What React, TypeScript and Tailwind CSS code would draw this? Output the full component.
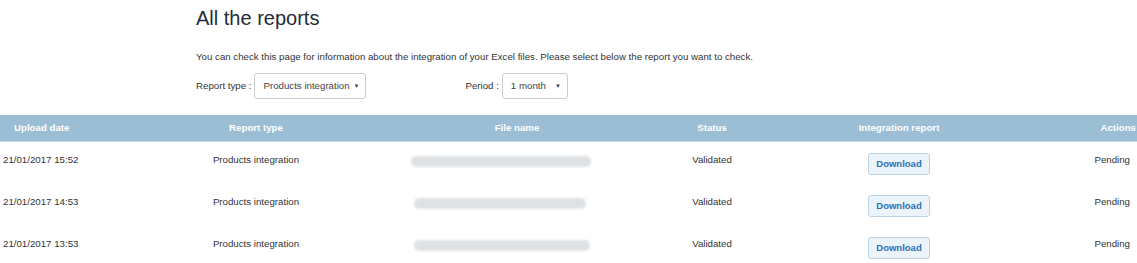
import React from "react";

const rows = [
  { date: "21/01/2017 15:52", bar: "w-[180px] ml-[-3px]" },
  { date: "21/01/2017 14:53", bar: "w-[172px]" },
  { date: "21/01/2017 13:53", bar: "w-[176px]" },
];

function Select({ label, value, w }: { label: string; value: string; w: string }) {
  return (
    <div className="flex items-center whitespace-nowrap">
      <span className="text-[9.7px] text-[#333]">{label}</span>
      <div
        className={`ml-[3px] flex h-[26px] items-center justify-between rounded-[3px] border border-[#ccc] bg-white pl-[8px] pr-[6px] text-[9.7px] text-[#444] ${w}`}
      >
        <span>{value}</span>
        <span className="text-[6px] text-[#444]">▼</span>
      </div>
    </div>
  );
}

export default function App() {
  const grid = "grid grid-cols-[170px_172px_320px_100px_274px_101px]";
  return (
    <div className="w-[1137px] bg-white font-['Liberation_Sans',Arial,sans-serif] text-[#333]">
      <div className="pl-[196px]">
        <h1 className="pt-[5px] text-[20px] leading-[26px] text-[#1e2c3c]">All the reports</h1>
        <p className="mt-[19px] text-[9.7px] leading-[14px] text-[#333]">
          You can check this page for information about the integration of your Excel files. Please select below the report you want to check.
        </p>
        <div className="mt-[9px] flex items-center">
          <Select label="Report type :" value="Products integration" w="w-[112px]" />
          <div className="ml-[99px]">
            <Select label="Period :" value="1 month" w="w-[66px]" />
          </div>
        </div>
      </div>

      <div className="mt-[16px]">
        <div className={`${grid} h-[27px] items-center border-b border-[#c6d9e7] bg-[#9bbed5] text-[9.7px] font-bold text-white`}>
          <div className="pl-[14px]">Upload date</div>
          <div className="text-center">Report type</div>
          <div className="pl-[30px] text-center">File name</div>
          <div className="text-center">Status</div>
          <div className="text-center">Integration report</div>
          <div className="pr-[1px] text-right">Actions</div>
        </div>
        {rows.map((r) => (
          <div key={r.date} className={`${grid} h-[42px] items-start text-[9.7px] leading-[16px] text-[#333]`}>
            <div className="pl-[3px] pt-[10px]">{r.date}</div>
            <div className="pt-[10px] text-center">Products integration</div>
            <div className="flex justify-start pl-[72px] pt-[14px]">
              <div className={`h-[11px] rounded-[5px] bg-[#dfe2e5] blur-[1px] ${r.bar}`} />
            </div>
            <div className="pt-[10px] text-center">Validated</div>
            <div className="flex justify-center pt-[11px]">
              <button className="h-[22px] w-[62px] rounded-[3px] border border-[#bcd3e6] bg-[#ebf4fb] text-[9.5px] font-bold text-[#2b70b2]">
                Download
              </button>
            </div>
            <div className="pr-[7px] pt-[10px] text-right">Pending</div>
          </div>
        ))}
      </div>
    </div>
  );
}
